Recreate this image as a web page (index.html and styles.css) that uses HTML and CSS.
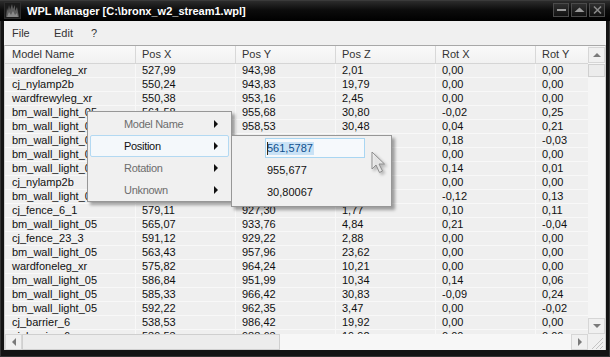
FILE: index.html
```html
<!DOCTYPE html>
<html lang="en">
<head>
    <meta charset="UTF-8">
    <title>WPL Manager</title>
    <link rel="stylesheet" href="styles.css">
</head>
<body>
<div class="window">
    <!-- Title bar -->
    <div class="titlebar">
        <svg class="app-icon" width="17" height="17" viewBox="0 0 17 17">
            <rect x="0.5" y="0.5" width="16" height="16" fill="#1b1b1b" stroke="#2c2c2c"/>
            <path d="M2 15 L3 6 L4 9 L5 3 L6 8 L8 2 L9 7 L11 3 L11 9 L13 5 L14 10 L15 15 Z" fill="#5c5c5c"/>
            <path d="M3 15 L5 10 L7 13 L9 9 L11 13 L13 11 L14 15 Z" fill="#8a8a8a"/>
        </svg>
        <span class="title">WPL Manager [C:\bronx_w2_stream1.wpl]</span>
        <div class="tb-buttons">
            <div class="tb-btn">
                <svg width="13" height="12" viewBox="0 0 13 12"><rect x="2" y="5" width="9" height="2" fill="#9a9a9a"/></svg>
            </div>
            <div class="tb-btn">
                <svg width="13" height="12" viewBox="0 0 13 12"><path d="M1.5 8 L6.5 3.5 L11.5 8 Z" fill="#9a9a9a"/></svg>
            </div>
            <div class="tb-btn">
                <svg width="13" height="12" viewBox="0 0 13 12"><path d="M3 2.5 L10 9.5 M10 2.5 L3 9.5" stroke="#8a8a8a" stroke-width="1.6"/></svg>
            </div>
        </div>
    </div>

    <div class="client">
        <div class="menubar">
            <span class="mb-item mb-file">File</span>
            <span class="mb-item mb-edit">Edit</span>
            <span class="mb-item">?</span>
        </div>

        <div class="listview">
            <div class="list-body">
                <div class="list-area">
                    <div class="header">
                        <div class="cell c-name">Model Name</div>
                        <div class="cell c-val">Pos X</div>
                        <div class="cell c-val">Pos Y</div>
                        <div class="cell c-val">Pos Z</div>
                        <div class="cell c-val">Rot X</div>
                        <div class="cell c-val">Rot Y</div>
                    </div>
                    <div class="row"><div class="cell c-name">wardfoneleg_xr</div><div class="cell c-val">527,99</div><div class="cell c-val">943,98</div><div class="cell c-val">2,01</div><div class="cell c-val">0,00</div><div class="cell c-val">0,00</div></div>
                    <div class="row"><div class="cell c-name">cj_nylamp2b</div><div class="cell c-val">550,24</div><div class="cell c-val">943,83</div><div class="cell c-val">19,79</div><div class="cell c-val">0,00</div><div class="cell c-val">0,00</div></div>
                    <div class="row"><div class="cell c-name">wardfrewyleg_xr</div><div class="cell c-val">550,38</div><div class="cell c-val">953,16</div><div class="cell c-val">2,45</div><div class="cell c-val">0,00</div><div class="cell c-val">0,00</div></div>
                    <div class="row"><div class="cell c-name">bm_wall_light_05</div><div class="cell c-val">561,58</div><div class="cell c-val">955,68</div><div class="cell c-val">30,80</div><div class="cell c-val">-0,02</div><div class="cell c-val">0,25</div></div>
                    <div class="row"><div class="cell c-name">bm_wall_light_0</div><div class="cell c-val"></div><div class="cell c-val">958,53</div><div class="cell c-val">30,48</div><div class="cell c-val">0,04</div><div class="cell c-val">0,21</div></div>
                    <div class="row"><div class="cell c-name">bm_wall_light_0</div><div class="cell c-val"></div><div class="cell c-val"></div><div class="cell c-val"></div><div class="cell c-val">0,18</div><div class="cell c-val">-0,03</div></div>
                    <div class="row"><div class="cell c-name">bm_wall_light_0</div><div class="cell c-val"></div><div class="cell c-val"></div><div class="cell c-val"></div><div class="cell c-val">0,00</div><div class="cell c-val">0,00</div></div>
                    <div class="row"><div class="cell c-name">bm_wall_light_0</div><div class="cell c-val"></div><div class="cell c-val"></div><div class="cell c-val"></div><div class="cell c-val">0,14</div><div class="cell c-val">0,01</div></div>
                    <div class="row"><div class="cell c-name">cj_nylamp2b</div><div class="cell c-val"></div><div class="cell c-val"></div><div class="cell c-val"></div><div class="cell c-val">0,00</div><div class="cell c-val">0,00</div></div>
                    <div class="row"><div class="cell c-name">bm_wall_light_0</div><div class="cell c-val"></div><div class="cell c-val"></div><div class="cell c-val"></div><div class="cell c-val">-0,12</div><div class="cell c-val">0,13</div></div>
                    <div class="row"><div class="cell c-name">cj_fence_6_1</div><div class="cell c-val">579,11</div><div class="cell c-val">927,30</div><div class="cell c-val">1,77</div><div class="cell c-val">0,10</div><div class="cell c-val">0,11</div></div>
                    <div class="row"><div class="cell c-name">bm_wall_light_05</div><div class="cell c-val">565,07</div><div class="cell c-val">933,76</div><div class="cell c-val">4,84</div><div class="cell c-val">0,21</div><div class="cell c-val">-0,04</div></div>
                    <div class="row"><div class="cell c-name">cj_fence_23_3</div><div class="cell c-val">591,12</div><div class="cell c-val">929,22</div><div class="cell c-val">2,88</div><div class="cell c-val">0,00</div><div class="cell c-val">0,00</div></div>
                    <div class="row"><div class="cell c-name">bm_wall_light_05</div><div class="cell c-val">563,43</div><div class="cell c-val">957,96</div><div class="cell c-val">23,62</div><div class="cell c-val">0,00</div><div class="cell c-val">0,00</div></div>
                    <div class="row"><div class="cell c-name">wardfoneleg_xr</div><div class="cell c-val">575,82</div><div class="cell c-val">964,24</div><div class="cell c-val">10,21</div><div class="cell c-val">0,00</div><div class="cell c-val">0,00</div></div>
                    <div class="row"><div class="cell c-name">bm_wall_light_05</div><div class="cell c-val">586,84</div><div class="cell c-val">951,99</div><div class="cell c-val">10,34</div><div class="cell c-val">0,14</div><div class="cell c-val">0,06</div></div>
                    <div class="row"><div class="cell c-name">bm_wall_light_05</div><div class="cell c-val">585,33</div><div class="cell c-val">966,42</div><div class="cell c-val">30,83</div><div class="cell c-val">-0,09</div><div class="cell c-val">0,24</div></div>
                    <div class="row"><div class="cell c-name">bm_wall_light_05</div><div class="cell c-val">592,22</div><div class="cell c-val">962,35</div><div class="cell c-val">3,47</div><div class="cell c-val">0,00</div><div class="cell c-val">-0,02</div></div>
                    <div class="row"><div class="cell c-name">cj_barrier_6</div><div class="cell c-val">538,53</div><div class="cell c-val">986,42</div><div class="cell c-val">19,92</div><div class="cell c-val">0,00</div><div class="cell c-val">0,00</div></div>
                    <div class="row"><div class="cell c-name">cj_barrier_6</div><div class="cell c-val">539,53</div><div class="cell c-val">988,63</div><div class="cell c-val">19,92</div><div class="cell c-val">0,00</div><div class="cell c-val">0,00</div></div>
                </div>

                <div class="vscroll">
                    <div class="sb-btn"><span class="arrow arrow-up"></span></div>
                    <div class="sb-thumb-v"></div>
                    <div class="sb-track"></div>
                    <div class="sb-btn"><span class="arrow arrow-down"></span></div>
                </div>
            </div>

            <div class="hscroll">
                <div class="sb-btn sb-btn-h"><span class="arrow arrow-left"></span></div>
                <div class="sb-thumb-h"></div>
                <div class="sb-track"></div>
                <div class="sb-btn sb-btn-h"><span class="arrow arrow-right"></span></div>
                <div class="grip">
                    <svg width="17" height="16" viewBox="0 0 17 16">
                        <path d="M15 4 L4 15 M15 8 L8 15 M15 12 L12 15" stroke="#c4c4c4" stroke-width="1"/>
                    </svg>
                </div>
            </div>
        </div>
    </div>

    <!-- Context menu -->
    <div class="ctx">
        <div class="ctx-item"><span>Model Name</span><span class="sub-arrow"></span></div>
        <div class="ctx-item hot"><span>Position</span><span class="sub-arrow"></span></div>
        <div class="ctx-item"><span>Rotation</span><span class="sub-arrow"></span></div>
        <div class="ctx-item"><span>Unknown</span><span class="sub-arrow"></span></div>
    </div>

    <div class="ctx submenu">
        <div class="sub-item editing"><div class="editbox"><span class="caret"></span><span class="selected">561,5787</span></div></div>
        <div class="sub-item">955,677</div>
        <div class="sub-item">30,80067</div>
    </div>

    <svg class="cursor" width="18" height="26" viewBox="0 0 18 26">
        <path d="M1 1 L1 18 L5 14 L8.5 21.5 L11.5 20 L8 13 L13.5 13 Z" fill="rgba(255,255,255,0.55)" stroke="#8c8c8c" stroke-width="1" stroke-linejoin="round"/>
    </svg>
</div>
</body>
</html>
```

FILE: styles.css
```css
* {
    box-sizing: border-box;
}

body {
    margin: 0;
    background: #000;
    font-family: "Liberation Sans", Arial, sans-serif;
    font-size: 11px;
}

/* Fenster */
.window {
    position: relative;
    width: 610px;
    height: 357px;
    display: flex;
    flex-direction: column;
    padding: 0 4px 7px;
    background: #131313;
    box-shadow: inset 0 0 0 1px #343434;
}

.titlebar {
    flex: none;
    height: 21px;
    margin: 0 -4px;
    padding: 0 5px 0 4px;
    display: flex;
    align-items: center;
    background: linear-gradient(#2c2c2c, #0c0c0c 45%, #000);
    border-top: 1px solid #3a3a3a;
}

.app-icon {
    flex: none;
    margin-top: -1px;
}

.title {
    margin-left: 6px;
    color: #fff;
    font-weight: bold;
    font-size: 11px;
    flex: 1;
}

.tb-buttons {
    display: flex;
    gap: 2px;
    margin-top: -3px;
}

.tb-btn {
    width: 16px;
    height: 14px;
    border: 1px solid #4a4a4a;
    background: linear-gradient(#303030, #121212);
    display: flex;
    align-items: center;
    justify-content: center;
}

.client {
    flex: 1;
    min-height: 0;
    display: flex;
    flex-direction: column;
    background: #f0f0f0;
}

.menubar {
    flex: none;
    height: 24px;
    display: flex;
    align-items: center;
    padding-left: 4px;
    color: #333;
    font-size: 11px;
}

.mb-item {
    padding: 0 4px;
}

.mb-file {
    width: 42px;
}

.mb-edit {
    width: 37px;
}

/* Liste */
.listview {
    flex: 1;
    display: flex;
    flex-direction: column;
    border-top: 1px solid #a8a8a8;
    border-left: 1px solid #cfcfcf;
    border-right: 1px solid #cfcfcf;
    min-height: 0;
}

.list-body {
    flex: 1;
    display: flex;
    min-height: 0;
    overflow: hidden;
}

.list-area {
    flex: 1;
    overflow: hidden;
    background: #efefef;
    color: #111;
}

.header {
    display: flex;
    height: 18px;
    border-bottom: 1px solid #d5d5d5;
    background: linear-gradient(#fafafa, #f1f1f1);
    color: #333;
}

.header .cell {
    line-height: 17px;
    border-right: 1px solid #d8d8d8;
}

.row {
    display: flex;
    height: 14px;
    border-bottom: 1px solid #f8f8f8;
}

.cell {
    flex: none;
    padding-left: 6px;
    line-height: 13px;
    white-space: nowrap;
    overflow: hidden;
    border-right: 1px solid #f8f8f8;
}

.c-name {
    width: 131px;
    padding-left: 7px;
}

.c-val {
    width: 100px;
}

/* Bildlaufleisten */
.vscroll {
    flex: none;
    width: 17px;
    display: flex;
    flex-direction: column;
    background: #f5f5f5;
    padding-top: 1px;
}

.sb-btn {
    flex: none;
    width: 17px;
    height: 16px;
    border: 1px solid #d6d6d6;
    background: #f0f0f0;
    display: flex;
    align-items: center;
    justify-content: center;
}

.sb-thumb-v {
    flex: none;
    height: 13px;
    margin-top: 1px;
    border: 1px solid #d0d0d0;
    background: #ececec;
}

.sb-track {
    flex: 1;
}

.hscroll {
    flex: none;
    height: 16px;
    display: flex;
    background: #f7f7f7;
}

.sb-thumb-h {
    flex: none;
    width: 258px;
    border: 1px solid #cfcfcf;
    background: #ececec;
}

.grip {
    flex: none;
    width: 17px;
    background: #f0f0f0;
}

.arrow {
    width: 0;
    height: 0;
    border: 4px solid transparent;
}

.arrow-up {
    border-bottom-color: #7a7a7a;
    margin-top: -4px;
}

.arrow-down {
    border-top-color: #7a7a7a;
    margin-top: 4px;
}

.arrow-left {
    border-right-color: #7a7a7a;
    margin-left: -4px;
}

.arrow-right {
    border-left-color: #7a7a7a;
    margin-left: 4px;
}

/* Kontextmenue */
.ctx {
    position: absolute;
    left: 87px;
    top: 111px;
    width: 145px;
    height: 91px;
    padding: 1px 2px;
    background: #f0f0f0;
    border: 1px solid #979797;
    box-shadow: 3px 3px 3px rgba(0, 0, 0, 0.35);
}

.ctx-item {
    height: 22px;
    display: flex;
    align-items: center;
    justify-content: space-between;
    padding: 0 10px 0 33px;
    border: 1px solid transparent;
    border-radius: 2px;
    color: #6d6d6d;
    letter-spacing: -0.3px;
}

.ctx-item.hot {
    color: #111;
    border-color: #b3d9f2;
    background: #f4f8fb;
}

.sub-arrow {
    width: 0;
    height: 0;
    border-top: 4px solid transparent;
    border-bottom: 4px solid transparent;
    border-left: 4px solid #111;
}

.submenu {
    left: 231px;
    top: 135px;
    width: 161px;
    height: 72px;
    padding: 1px 2px;
}

.sub-item {
    height: 22px;
    display: flex;
    align-items: center;
    padding-left: 33px;
    color: #111;
}

.sub-item.editing {
    padding-left: 31px;
}

.editbox {
    width: 100px;
    height: 20px;
    display: flex;
    align-items: center;
    padding-left: 1px;
    border: 1px solid #a9d6f2;
    background: #f6f9fc;
}

.caret {
    width: 1px;
    height: 13px;
    margin-right: -1px;
    background: #3a2a10;
    position: relative;
    z-index: 1;
}

.selected {
    background: #c9e2f6;
    color: #0f4f8c;
    line-height: 13px;
    padding: 0 1px 0 0;
}

.cursor {
    position: absolute;
    left: 371px;
    top: 151px;
    filter: drop-shadow(2px 2px 1.5px rgba(0, 0, 0, 0.35));
}
```
